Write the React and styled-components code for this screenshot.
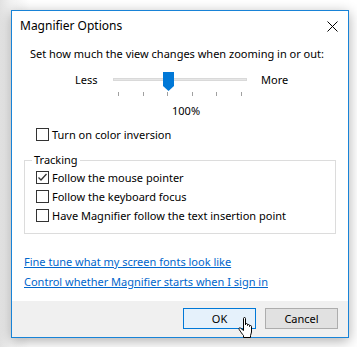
import React from "react";
import styled, { createGlobalStyle } from "styled-components";

const GlobalStyle = createGlobalStyle`
  html, body {
    margin: 0;
    padding: 0;
    background: #ffffff;
  }
  body {
    font-family: "Noto Sans", "Open Sans", sans-serif;
    font-size: 11px;
    color: #000000;
  }
`;

const Page = styled.div`
  width: 357px;
  height: 347px;
  box-sizing: border-box;
  padding: 10px 8px 9px 11px;
  background: linear-gradient(90deg, #e2e2e2 0px, #f2f2f2 11px, #ffffff 30px);
`;

const Dialog = styled.div`
  position: relative;
  width: 338px;
  height: 328px;
  box-sizing: border-box;
  border: 1px solid #1883d7;
  background: #ffffff;
  display: flex;
  flex-direction: column;
  box-shadow: 0 3px 12px rgba(0, 0, 0, 0.32);
`;

const TitleBar = styled.div`
  height: 30px;
  display: flex;
  align-items: center;
  justify-content: space-between;
  padding: 0 10px 0 8px;
`;

const Title = styled.span`
  font-size: 12px;
  line-height: 16px;
`;

const CloseButton = styled.div`
  width: 12px;
  height: 12px;
  display: flex;
  align-items: center;
  justify-content: center;
`;

const Body = styled.div`
  flex: 1;
  display: flex;
  flex-direction: column;
`;

const Instruction = styled.div`
  margin-top: 5px;
  padding-left: 18px;
  line-height: 16px;
  white-space: nowrap;
`;

const SliderRow = styled.div`
  margin-top: 8px;
  display: flex;
  align-items: flex-start;
  padding-left: 63px;
`;

const SideLabel = styled.span`
  width: ${(p) => p.$width}px;
  line-height: 20px;
  padding-left: ${(p) => p.$indent || 0}px;
`;

const Slider = styled.div`
  position: relative;
  width: 134px;
  height: 27px;
`;

const Track = styled.div`
  margin-top: 8px;
  height: 3px;
  background: #e6e6e6;
  border: 1px solid #d9d9d9;
  box-sizing: border-box;
`;

const Thumb = styled.svg`
  position: absolute;
  left: 50px;
  top: 2px;
`;

const Ticks = styled.div`
  margin-top: 11px;
  display: flex;
  justify-content: space-between;
  padding: 0 5px;
`;

const Tick = styled.span`
  width: 1px;
  height: 4px;
  background: #a0a0a0;
`;

const Percent = styled.div`
  padding-left: 160px;
  margin-top: 6px;
  line-height: 16px;
`;

const CheckRow = styled.label`
  display: flex;
  align-items: center;
  height: ${(p) => p.$height || 19}px;
  padding-left: ${(p) => p.$indent || 0}px;
  margin-top: ${(p) => p.$top || 0}px;
  white-space: nowrap;
`;

const Box = styled.span`
  width: 13px;
  height: 13px;
  box-sizing: border-box;
  border: 1px solid #333333;
  background: #ffffff;
  margin-right: 3px;
  display: flex;
  align-items: center;
  justify-content: center;
`;

const Group = styled.fieldset`
  margin: 9px 0 0 12px;
  width: 312px;
  box-sizing: border-box;
  border: 1px solid #dcdcdc;
  padding: 0 0 8px 11px;
  min-width: 0;
`;

const Legend = styled.legend`
  margin-left: -4px;
  padding: 0 2px;
  line-height: 16px;
`;

const Links = styled.div`
  margin-top: 18px;
  padding-left: 12px;
  display: flex;
  flex-direction: column;
`;

const LinkText = styled.a`
  color: #0066cc;
  text-decoration: underline;
  line-height: 20px;
  width: max-content;
  cursor: pointer;
`;

const Footer = styled.div`
  margin-top: auto;
  height: 36px;
  background: #f0f0f0;
  display: flex;
  justify-content: flex-end;
  align-items: flex-start;
  gap: 9px;
  padding: 7px 10px 0 0;
  box-sizing: border-box;
`;

const Button = styled.button`
  width: 73px;
  height: 21px;
  box-sizing: border-box;
  font-family: inherit;
  font-size: 11px;
  color: #000000;
  padding: 0;
  border: 1px solid ${(p) => (p.$primary ? "#0078d7" : "#adadad")};
  background: ${(p) => (p.$primary ? "#e5f1fb" : "#e1e1e1")};
`;

const Cursor = styled.svg`
  position: absolute;
  left: 226px;
  top: 306px;
`;

function Check({ checked }) {
  return (
    <Box>
      {checked && (
        <svg width="11" height="11" viewBox="0 0 11 11">
          <path d="M1.5 5.5 L4 8 L9.5 2" fill="none" stroke="#333" strokeWidth="1.3" />
        </svg>
      )}
    </Box>
  );
}

export default function App() {
  return (
    <>
      <GlobalStyle />
      <Page>
        <Dialog>
          <TitleBar>
            <Title>Magnifier Options</Title>
            <CloseButton>
              <svg width="11" height="11" viewBox="0 0 11 11">
                <path d="M0.5 0.5 L10.5 10.5 M10.5 0.5 L0.5 10.5" stroke="#000" strokeWidth="1" />
              </svg>
            </CloseButton>
          </TitleBar>
          <Body>
            <Instruction>Set how much the view changes when zooming in or out:</Instruction>
            <SliderRow>
              <SideLabel $width={38}>Less</SideLabel>
              <Slider>
                <Track />
                <Thumb width="11" height="19" viewBox="0 0 11 19">
                  <path d="M0 0 H11 V14 L5.5 19 L0 14 Z" fill="#0078d7" />
                </Thumb>
                <Ticks>
                  {[0, 1, 2, 3, 4, 5].map((i) => (
                    <Tick key={i} />
                  ))}
                </Ticks>
              </Slider>
              <SideLabel $width={60} $indent={14}>
                More
              </SideLabel>
            </SliderRow>
            <Percent>100%</Percent>
            <CheckRow $indent={24} $top={6} $height={18}>
              <Check />
              Turn on color inversion
            </CheckRow>
            <Group>
              <Legend>Tracking</Legend>
              <CheckRow>
                <Check checked />
                Follow the mouse pointer
              </CheckRow>
              <CheckRow>
                <Check />
                Follow the keyboard focus
              </CheckRow>
              <CheckRow>
                <Check />
                Have Magnifier follow the text insertion point
              </CheckRow>
            </Group>
            <Links>
              <LinkText>Fine tune what my screen fonts look like</LinkText>
              <LinkText>Control whether Magnifier starts when I sign in</LinkText>
            </Links>
          </Body>
          <Footer>
            <Button $primary>OK</Button>
            <Button>Cancel</Button>
          </Footer>
          <Cursor width="16" height="22" viewBox="0 0 16 22">
            <path
              d="M5.5 1.5 C5.5 0.9 5.9 0.5 6.5 0.5 C7.1 0.5 7.5 0.9 7.5 1.5 L7.5 8 L7.5 7.5 C7.5 6.9 7.9 6.5 8.5 6.5 C9.1 6.5 9.5 6.9 9.5 7.5 L9.5 8.5 C9.5 7.9 9.9 7.5 10.5 7.5 C11.1 7.5 11.5 7.9 11.5 8.5 L11.5 9.5 C11.5 8.9 11.9 8.5 12.5 8.5 C13.1 8.5 13.5 8.9 13.5 9.5 L13.5 15 C13.5 16.5 12.5 17.5 12.5 18.5 L12.5 20.5 L5.5 20.5 L5.5 18.5 C4.5 17.5 2.5 14.5 1.2 12.5 C0.6 11.4 1.3 10.4 2.4 11 L5.5 13.5 Z"
              fill="#fff"
              stroke="#000"
              strokeWidth="1"
              strokeLinejoin="round"
            />
          </Cursor>
        </Dialog>
      </Page>
    </>
  );
}
